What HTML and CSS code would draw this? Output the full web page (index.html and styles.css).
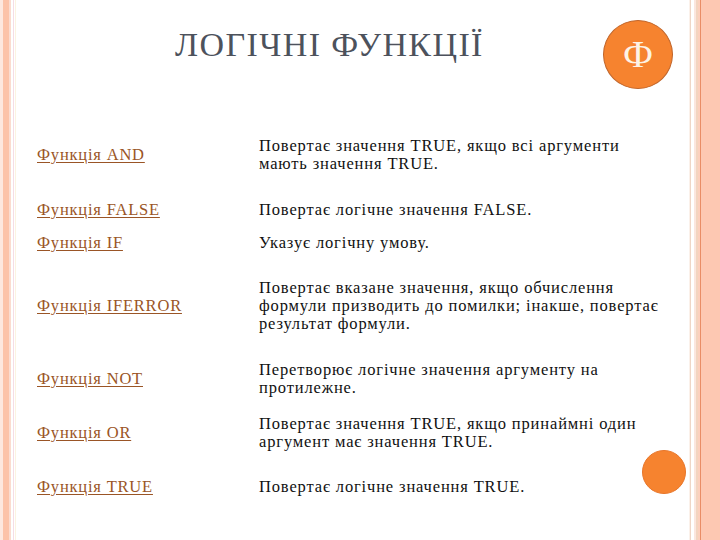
FILE: index.html
```html
<!DOCTYPE html>
<html lang="uk">
<head>
<meta charset="utf-8">
<link rel="stylesheet" href="styles.css">
</head>
<body>
<div class="slide">
  <div class="edge-left"></div>
  <main class="content">
    <header class="head">
      <h1 class="title">ЛОГІЧНІ ФУНКЦІЇ</h1>
      <div class="badge">Ф</div>
    </header>
    <section class="table">
      <div class="row">
        <a class="fn" href="#">Функція AND</a>
        <p class="desc">Повертає значення TRUE, якщо всі аргументи<br>мають значення TRUE.</p>
      </div>
      <div class="row gap-28">
        <a class="fn" href="#">Функція FALSE</a>
        <p class="desc">Повертає логічне значення FALSE.</p>
      </div>
      <div class="row gap-15">
        <a class="fn" href="#">Функція IF</a>
        <p class="desc">Указує логічну умову.</p>
      </div>
      <div class="row gap-27">
        <a class="fn" href="#">Функція IFERROR</a>
        <p class="desc">Повертає вказане значення, якщо обчислення<br>формули призводить до помилки; інакше, повертає<br>результат формули.</p>
      </div>
      <div class="row gap-28">
        <a class="fn" href="#">Функція NOT</a>
        <p class="desc">Перетворює логічне значення аргументу на<br>протилежне.</p>
      </div>
      <div class="row gap-18">
        <a class="fn" href="#">Функція OR</a>
        <p class="desc">Повертає значення TRUE, якщо принаймні один<br>аргумент має значення TRUE.</p>
      </div>
      <div class="row gap-27">
        <a class="fn" href="#">Функція TRUE</a>
        <p class="desc">Повертає логічне значення TRUE.</p>
      </div>
    </section>
    <div class="dot"></div>
  </main>
  <div class="edge-right"></div>
</div>
</body>
</html>
```

FILE: styles.css
```css
* { box-sizing: border-box; }
html, body {
  margin: 0;
  padding: 0;
  background: #ffffff;
}
.slide {
  width: 720px;
  height: 540px;
  display: flex;
  overflow: hidden;
}
.edge-left {
  width: 17px;
  flex: none;
  background: linear-gradient(to right,
    #fde8de 0, #fde8de 3px,
    #fcc3a8 3px, #fcc3a8 9px,
    #fbdccf 9px, #fbdccf 11px,
    #ffffff 11px, #ffffff 13px,
    #f6dde4 13px, #f6dde4 14px,
    #ffffff 14px, #ffffff 15px,
    #fcf3e2 15px, #fcf3e2 16px,
    #ffffff 16px);
}
.edge-right {
  width: 33px;
  flex: none;
  background: linear-gradient(to right,
    #ffffff 0, #ffffff 2px,
    #fbf1ea 2px, #fbf1ea 3px,
    #efd6c6 3px, #efd6c6 4px,
    #ffffff 4px, #ffffff 7px,
    #fbe6de 7px, #fbe6de 9px,
    #f2d4c0 9px, #f2d4c0 11px,
    #fcd0bd 11px, #fcd0bd 13px,
    #e98d66 13px, #e98d66 14px,
    #fdc8b2 14px, #fdc8b2 100%);
}
.content {
  flex: 1;
  position: relative;
  padding: 0 0 0 20px;
}
.head {
  height: 137px;
  position: relative;
}
.title {
  margin: 0;
  position: absolute;
  left: 138px;
  top: 25px;
  font-family: "Liberation Serif", "Times New Roman", serif;
  font-weight: normal;
  font-size: 34px;
  letter-spacing: 1.4px;
  color: #4d525c;
  line-height: 40px;
  white-space: nowrap;
}
.badge {
  position: absolute;
  left: 566px;
  top: 20px;
  width: 70px;
  height: 69px;
  border-radius: 50%;
  background: #f6832f;
  border: 1.5px solid #c0652a;
  color: #fdf3e6;
  font-family: "Liberation Serif", "Times New Roman", serif;
  font-size: 38px;
  line-height: 66px;
  text-align: center;
}
.table {
  display: flex;
  flex-direction: column;
}
.row {
  display: flex;
  align-items: center;
}
.gap-15 { margin-top: 15px; }
.gap-18 { margin-top: 18px; }
.gap-27 { margin-top: 27px; }
.gap-28 { margin-top: 28px; }
.fn {
  width: 222px;
  flex: none;
  font-family: "Liberation Serif", "Times New Roman", serif;
  font-size: 16.5px;
  letter-spacing: 0.8px;
  line-height: 18px;
  color: #9a5526;
  text-decoration: underline;
  text-underline-offset: 2px;
}
.desc {
  margin: 0;
  font-family: "Liberation Serif", "Times New Roman", serif;
  font-size: 16.5px;
  letter-spacing: 0.85px;
  line-height: 18px;
  color: #111111;
  white-space: nowrap;
}
.dot {
  position: absolute;
  left: 625px;
  top: 450px;
  width: 44px;
  height: 44px;
  border-radius: 50%;
  background: #f6832f;
  border: 1px solid #e8762a;
}
```
